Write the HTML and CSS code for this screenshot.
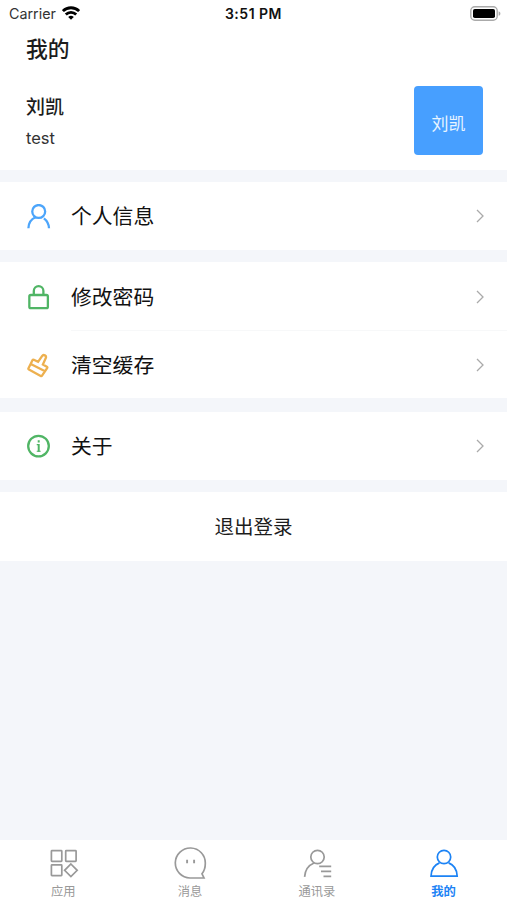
FILE: index.html
```html
<!DOCTYPE html>
<html lang="zh-CN">
<head>
<meta charset="utf-8">
<meta name="viewport" content="width=device-width, initial-scale=1">
<title>我的</title>
<link rel="stylesheet" href="styles.css">
</head>
<body>
<div class="screen">
  <header class="top">
    <div class="status">
      <div class="carrier"><span>Carrier</span>
        <svg width="18" height="14" viewBox="0 0 18 14" fill="none" stroke="#000" stroke-width="2.8"><path d="M.9 5.1a11.5 11.5 0 0 1 16.2 0M3.8 8.5a7.4 7.4 0 0 1 10.4 0"/><path d="M9 13.8 6.2 11a4 4 0 0 1 5.6 0Z" fill="#000" stroke="none"/></svg>
      </div>
      <div class="time">3:51 PM</div>
      <svg class="battery" width="31" height="15" viewBox="0 0 31 15"><rect x=".8" y=".8" width="26.4" height="13.4" rx="4" fill="#fff" stroke="#aaa" stroke-width="1.4"/><rect x="3" y="3" width="22" height="9" rx="1.8"/><path d="M28.6 5.2c2.4.8 2.4 3.8 0 4.6Z" fill="#aaa"/></svg>
    </div>
    <h1>我的</h1>
    <div class="profile">
      <div><div class="name">刘凯</div><div class="account">test</div></div>
      <div class="avatar">刘凯</div>
    </div>
  </header>
  <main>
    <section class="group">
      <div class="row">
        <svg class="icon blue" viewBox="0 0 24 24"><circle cx="12.2" cy="7.2" r="6.2"/><path d="M2.3 23.3c.2-5.3 2.7-8.9 6.900-10.600M17.200 13.800c3 2.300 4.700 5.500 4.900 9.500"/></svg>
        <span class="label">个人信息</span><svg class="chevron" viewBox="0 0 8 14"><path d="m1 1 6 6-6 6"/></svg>
      </div>
    </section>
    <section class="group">
      <div class="row lowered">
        <svg class="icon green" viewBox="0 0 24 24"><rect x="3.2" y="9.6" width="17.8" height="12.6" rx="1.4"/><path d="M7.500 9.600V5.700a4.600 4.600 0 0 1 9.200 0v3.900"/></svg>
        <span class="label">修改密码</span><svg class="chevron" viewBox="0 0 8 14"><path d="m1 1 6 6-6 6"/></svg>
      </div>
      <div class="row divided">
        <svg class="icon orange" viewBox="0 0 24 24"><path d="M6.200 6.900q.5-.8 1.300-.4l4.100 2 3.800-5.600c1.400-2 4.600-.3 3.600 1.900L16.200 11l3.800 2.200q.8.500.3 1.300l-4.900 7.200q-.5.800-1.300.3L2.800 15.900q-.8-.5-.4-1.300ZM4.600 10.600l13.200 6.600"/></svg>
        <span class="label">清空缓存</span><svg class="chevron" viewBox="0 0 8 14"><path d="m1 1 6 6-6 6"/></svg>
      </div>
    </section>
    <section class="group about">
      <div class="row">
        <svg class="icon green" viewBox="0 0 24 24"><circle cx="12" cy="11.600" r="9.900"/><path stroke-width="1.900" d="M12.200 9.700v7.300M12.200 6v2.200"/><path stroke-width="1.100" d="M10.300 10.200h1.900M10.300 16.600h3.800"/></svg>
        <span class="label">关于</span><svg class="chevron" viewBox="0 0 8 14"><path d="m1 1 6 6-6 6"/></svg>
      </div>
    </section>
    <section class="group logout"><span>退出登录</span></section>
  </main>
  <nav class="tabs">
    <div class="tab"><svg viewBox="0 0 34 34"><rect x="5.4" y="3.7" width="10.4" height="10.7" rx=".6"/><rect x="19.7" y="3.7" width="10.4" height="10.7" rx=".6"/><rect x="5.4" y="17.9" width="10.4" height="10.7" rx=".6"/><path d="m24.9 17 6.3 6.3-6.3 6.3-6.3-6.3Z"/></svg><span>应用</span></div>
    <div class="tab"><svg viewBox="0 0 34 34"><path d="M17 31H31l-2-4.200C31.200 24.200 32.300 20.700 32.300 16.600A15 15 0 1 0 17 31Z"/><path d="M14.100 12.700v3.600M21.100 12.700v3.600" stroke-width="1.900"/></svg><span>消息</span></div>
    <div class="tab"><svg viewBox="0 0 34 34"><circle cx="17.5" cy="10" r="6.700"/><path d="M4.600 29.900C5 23.500 8.800 18.200 14 16M19.200 19.400h12M21 24.300h10.200M23.500 29.300h7.700"/></svg><span>通讯录</span></div>
    <div class="tab active"><svg viewBox="0 0 34 34"><circle cx="17" cy="10" r="6.700"/><path d="M12.500 15.900C7.500 17.900 4.200 22.800 4 29.200h26.200C30 22.800 26.700 17.900 21.600 15.900"/></svg><span>我的</span></div>
  </nav>
</div>
</body>
</html>
```
FILE: styles.css
```css
* { box-sizing: border-box; }
body {
  margin: 0;
  background: #f4f6fa;
  color: #1c1c1c;
  font-family: Inter, "Noto Sans CJK SC", sans-serif;
}
svg { display: block; flex: none; }
.screen { height: 900px; display: flex; flex-direction: column; }
.top { height: 170px; background: #fff; }
.status {
  height: 27px;
  display: grid;
  grid-template-columns: 1fr auto 1fr;
  align-items: center;
  padding: 0 6px;
  font-size: 14px;
}
.carrier { display: flex; gap: 6px; align-items: center; padding-left: 3px; color: #333; font-size: 14.3px; }
.carrier svg { margin-top: -2px; }
.time { color: #111; font-size: 14px; font-weight: 600; letter-spacing: .5px; }
.battery { justify-self: end; }
h1 { margin: 6px 26px 0; font-size: 21.8px; line-height: 32px; font-weight: 500; }
.profile { display: flex; justify-content: space-between; padding: 21px 24px 0 26px; }
.name { margin-top: 8px; font-size: 19px; line-height: 28px; font-weight: 500; }
.account { margin-top: 3px; font-size: 16.5px; line-height: 26px; color: #333; }
.avatar {
  width: 69px; height: 69px;
  display: grid; place-items: center;
  padding-top: 3px;
  border-radius: 4px;
  background: #479fff;
  color: #e8f4ff;
  font-size: 17px;
}
main { flex: 1; padding-top: 12px; display: flex; flex-direction: column; gap: 12px; }
.group { background: #fff; }
.group.about { margin-top: 2px; }
.row { position: relative; height: 68px; display: flex; align-items: center; padding: 0 23px 0 26px; }
.divided, .lowered { padding-top: 2px; }
.divided::before { content: ""; position: absolute; top: 0; left: 71px; right: 0; height: 1px; background: #f7f8f9; }
.icon { width: 25px; height: 25px; fill: none; stroke: currentColor; stroke-width: 2.2; }
.blue { color: #4ca5fb; }
.green { color: #50b565; }
.orange { color: #edb04f; }
.label { flex: 1; margin-left: 20px; padding-top: 2px; font-size: 20.8px; line-height: 30px; color: #111; }
.chevron { width: 8px; height: 14px; fill: none; stroke: #aaa; stroke-width: 1.3; }
.logout { height: 69px; display: grid; place-items: center; padding-bottom: 2px; font-size: 19.5px; }
.tabs { height: 60px; display: grid; grid-template-columns: repeat(4, 1fr); background: #fff; }
.tab { display: flex; flex-direction: column; align-items: center; padding-top: 7px; color: #999; font-size: 12.3px; line-height: 18px; }
.tab svg { width: 34px; height: 34px; fill: none; stroke: currentColor; stroke-width: 1.7; }
.tab span { margin-top: 2px; }
.tab.active { color: #1c83f5; font-weight: 700; }
```
